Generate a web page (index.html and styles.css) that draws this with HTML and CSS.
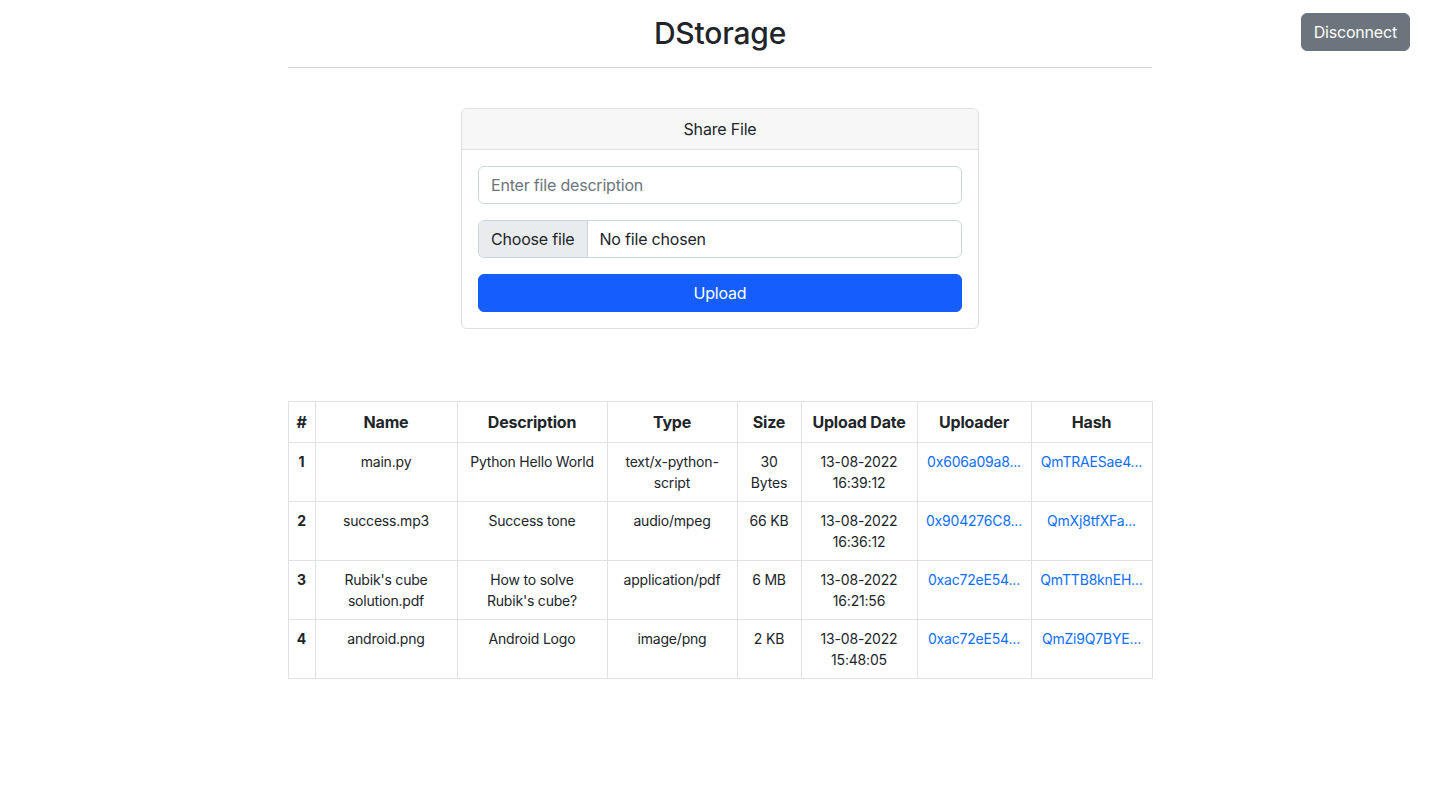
FILE: index.html
```html
<!DOCTYPE html>
<html lang="en">
<head>
<meta charset="utf-8">
<title>DStorage</title>
<link rel="stylesheet" href="styles.css">
</head>
<body>
<button class="btn btn-disconnect" type="button">Disconnect</button>
<main class="container">
  <h2 class="title">DStorage</h2>
  <hr class="divider">
  <section class="card">
    <div class="card-header">Share File</div>
    <form class="card-body">
      <input class="form-control" type="text" placeholder="Enter file description">
      <label class="form-control file-control">
        <input class="file-hidden" type="file">
        <span class="file-btn">Choose file</span>
        <span class="file-name">No file chosen</span>
      </label>
      <button class="btn btn-primary" type="button">Upload</button>
    </form>
  </section>
  <table class="table">
    <colgroup>
      <col class="c-num"><col class="c-name"><col class="c-desc"><col class="c-type"><col class="c-size"><col class="c-date"><col class="c-upl"><col class="c-hash">
    </colgroup>
    <thead>
      <tr><th>#</th><th>Name</th><th>Description</th><th>Type</th><th>Size</th><th>Upload Date</th><th>Uploader</th><th>Hash</th></tr>
    </thead>
    <tbody>
      <tr><td class="num">1</td><td>main.py</td><td>Python Hello World</td><td>text/x-python-script</td><td>30 Bytes</td><td>13-08-2022 16:39:12</td><td><a href="#">0x606a09a8...</a></td><td><a href="#">QmTRAESae4...</a></td></tr>
      <tr><td class="num">2</td><td>success.mp3</td><td>Success tone</td><td>audio/mpeg</td><td>66 KB</td><td>13-08-2022 16:36:12</td><td><a href="#">0x904276C8...</a></td><td><a href="#">QmXj8tfXFa...</a></td></tr>
      <tr><td class="num">3</td><td>Rubik's cube solution.pdf</td><td>How to solve Rubik's cube?</td><td>application/pdf</td><td>6 MB</td><td>13-08-2022 16:21:56</td><td><a href="#">0xac72eE54...</a></td><td><a href="#">QmTTB8knEH...</a></td></tr>
      <tr><td class="num">4</td><td>android.png</td><td>Android Logo</td><td>image/png</td><td>2 KB</td><td>13-08-2022 15:48:05</td><td><a href="#">0xac72eE54...</a></td><td><a href="#">QmZi9Q7BYE...</a></td></tr>
    </tbody>
  </table>
</main>
</body>
</html>
```

FILE: styles.css
```css
* { box-sizing: border-box; }
html, body { margin: 0; padding: 0; }
body {
  font-family: Inter, "Liberation Sans", sans-serif;
  font-size: 16px;
  line-height: 1.5;
  letter-spacing: -0.012em;
  color: #212529;
  background: #fff;
}
.btn {
  font-family: inherit;
  font-size: 16px;
  line-height: 24px;
  letter-spacing: inherit;
  padding: 6px 12px;
  border: 1px solid transparent;
  border-radius: 6px;
  cursor: pointer;
}
.btn-disconnect {
  position: absolute;
  top: 13px;
  right: 30px;
  background: #6c757d;
  border-color: #6c757d;
  color: #fff;
}
.container {
  width: 864px;
  margin: 0 auto;
  display: flex;
  flex-direction: column;
  align-items: center;
}
.title {
  margin: 14px 0 0;
  font-size: 30px;
  font-weight: 500;
  line-height: 38px;
  text-align: center;
}
.divider {
  width: 100%;
  margin: 15px 0 40px;
  border: 0;
  border-top: 1px solid #d3d3d3;
}
.card {
  width: 518px;
  border: 1px solid #dfdfdf;
  border-radius: 6px;
  overflow: hidden;
}
.card-header {
  background: #f7f7f7;
  border-bottom: 1px solid #dfdfdf;
  padding: 8px 16px;
  text-align: center;
  line-height: 24px;
}
.card-body {
  padding: 16px;
  display: flex;
  flex-direction: column;
  gap: 16px;
  margin: 0;
}
.form-control {
  width: 100%;
  height: 38px;
  padding: 6px 12px;
  font-family: inherit;
  font-size: 16px;
  line-height: 24px;
  letter-spacing: inherit;
  color: #212529;
  border: 1px solid #ced4da;
  border-radius: 6px;
  background: #fff;
}
.form-control::placeholder { color: #6c757d; }
.file-control {
  display: flex;
  align-items: stretch;
  padding: 0;
  overflow: hidden;
  cursor: pointer;
}
.file-hidden { display: none; }
.file-btn {
  padding: 6px 12px;
  background: #e9ecef;
  border-right: 1px solid #ced4da;
}
.file-name {
  padding: 6px 12px;
}
.btn-primary {
  width: 100%;
  background: #155dfc;
  border-color: #155dfc;
  color: #fff;
}
.table {
  width: 864px;
  margin-top: 72px;
  border-collapse: collapse;
  table-layout: fixed;
  text-align: center;
}
.c-num { width: 27px; }
.c-name { width: 142px; }
.c-desc { width: 150px; }
.c-type { width: 130px; }
.c-size { width: 64px; }
.c-date { width: 116px; }
.c-upl { width: 114px; }
.c-hash { width: 121px; }
.table th, .table td {
  border: 1px solid #dee2e6;
  padding: 8px;
  vertical-align: top;
}
.table th {
  font-weight: 700;
  font-size: 16px;
  line-height: 24px;
}
.table td {
  font-size: 14px;
  line-height: 21px;
  height: 59px;
}
.table td.num { font-weight: 700; }
.table a {
  color: #0d6efd;
  text-decoration: none;
  white-space: nowrap;
}
```
